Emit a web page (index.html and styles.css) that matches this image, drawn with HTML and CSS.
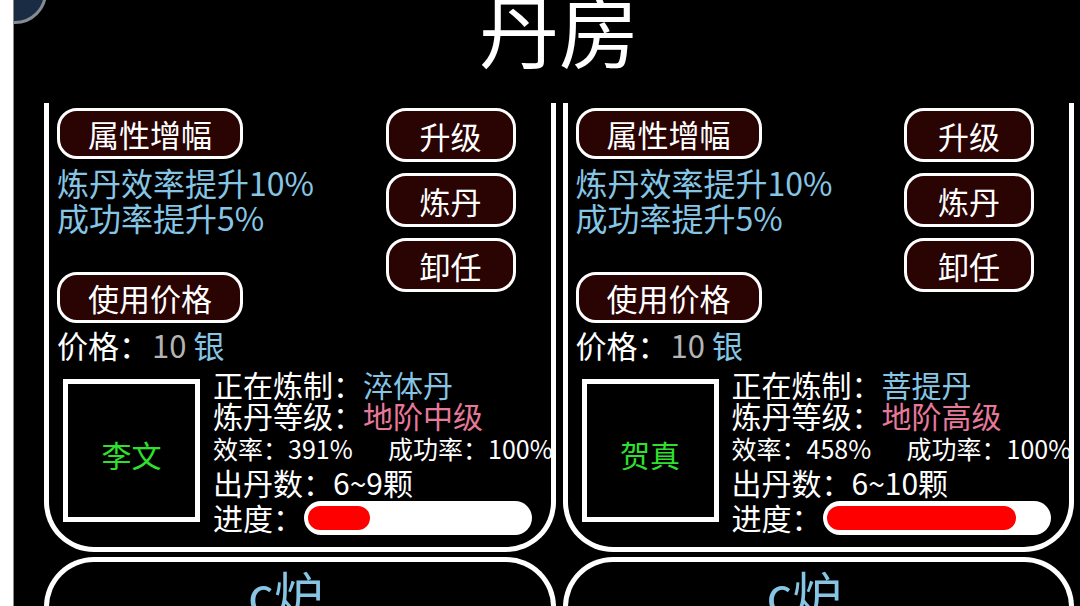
FILE: index.html
```html
<!DOCTYPE html>
<html lang="zh-CN">
<head>
<meta charset="utf-8">
<title>丹房</title>
<link rel="stylesheet" href="styles.css">
</head>
<body>
<div class="app">
  <div class="strip"></div>
  <main class="main">
    <div class="back"></div>
    <header class="header"><h1>丹房</h1></header>
    <div class="grid">
      <section class="card card-top">
        <div class="top-row">
          <div class="left-col">
            <div class="btn btn-wide">属性增幅</div>
            <div class="effects">
              <div>炼丹效率提升10%</div>
              <div>成功率提升5%</div>
            </div>
            <div class="btn btn-wide btn-price">使用价格</div>
            <div class="price">价格：<span class="grey">10</span> <span class="blue">银</span></div>
          </div>
          <div class="right-col">
            <div class="btn btn-small">升级</div>
            <div class="btn btn-small">炼丹</div>
            <div class="btn btn-small">卸任</div>
          </div>
        </div>
        <div class="bottom-row">
          <div class="person"><span>李文</span></div>
          <div class="info">
            <div class="r1">正在炼制：<span class="blue">淬体丹</span></div>
            <div class="r2">炼丹等级：<span class="pink">地阶中级</span></div>
            <div class="r3"><span class="eff">效率：391%</span><span>成功率：100%</span></div>
            <div class="r4">出丹数：6~9颗</div>
            <div class="r5">进度：<div class="bar"><div class="fill" style="width:28%"></div></div></div>
          </div>
        </div>
      </section>
      <section class="card card-top">
        <div class="top-row">
          <div class="left-col">
            <div class="btn btn-wide">属性增幅</div>
            <div class="effects">
              <div>炼丹效率提升10%</div>
              <div>成功率提升5%</div>
            </div>
            <div class="btn btn-wide btn-price">使用价格</div>
            <div class="price">价格：<span class="grey">10</span> <span class="blue">银</span></div>
          </div>
          <div class="right-col">
            <div class="btn btn-small">升级</div>
            <div class="btn btn-small">炼丹</div>
            <div class="btn btn-small">卸任</div>
          </div>
        </div>
        <div class="bottom-row">
          <div class="person"><span>贺真</span></div>
          <div class="info">
            <div class="r1">正在炼制：<span class="blue">菩提丹</span></div>
            <div class="r2">炼丹等级：<span class="pink">地阶高级</span></div>
            <div class="r3"><span class="eff">效率：458%</span><span>成功率：100%</span></div>
            <div class="r4">出丹数：6~10颗</div>
            <div class="r5">进度：<div class="bar"><div class="fill" style="width:86%"></div></div></div>
          </div>
        </div>
      </section>
      <section class="card card-next"><div class="furnace">c炉</div></section>
      <section class="card card-next"><div class="furnace">c炉</div></section>
    </div>
  </main>
</div>
</body>
</html>
```

FILE: styles.css
```css
html, body {
  margin: 0;
  padding: 0;
  background: #000;
}
body {
  width: 1080px;
  height: 606px;
  overflow: hidden;
  font-family: "Noto Sans CJK SC", "Noto Sans", sans-serif;
  color: #fff;
}
.app {
  display: flex;
  height: 606px;
}
.strip {
  width: 13px;
  background: #fff;
  border-right: 1px solid #8a8a8a;
  flex: none;
}
.main {
  flex: 1;
  position: relative;
  overflow: hidden;
  padding: 0 6px 0 30px;
  background: #000;
}
.back {
  position: absolute;
  left: -31px;
  top: -40px;
  width: 58px;
  height: 58px;
  border-radius: 50%;
  background: #1a2c44;
  border: 3px solid #858b93;
}
.header {
  height: 103px;
  text-align: center;
}
.header h1 {
  margin: 0;
  font-size: 80px;
  line-height: 54px;
  font-weight: normal;
  color: #fff;
}
.grid {
  display: grid;
  grid-template-columns: 1fr 1fr;
  grid-template-rows: 449px 200px;
  column-gap: 7px;
  row-gap: 5px;
}
.card {
  box-sizing: border-box;
  border: 5px solid #fff;
  min-width: 0;
}
.card-top {
  border-top: none;
  border-radius: 0 0 50px 50px;
  padding: 5px 35px 0 8px;
  display: flex;
  flex-direction: column;
}
.top-row {
  display: flex;
  justify-content: space-between;
}
.btn {
  box-sizing: border-box;
  border: 3px solid #fff;
  border-radius: 20px;
  background: #2a0303;
  color: #fff;
  font-size: 31px;
  display: flex;
  align-items: center;
  justify-content: center;
  line-height: 1;
}
.btn-wide {
  width: 186px;
  height: 51px;
}
.btn-small {
  width: 130px;
  height: 54px;
}
.right-col {
  display: flex;
  flex-direction: column;
  gap: 11px;
}
.effects {
  margin-top: 6px;
  color: #86c5e4;
  font-size: 32px;
  line-height: 35px;
  white-space: nowrap;
}
.btn-price {
  margin-top: 37px;
}
.price {
  margin-top: 5px;
  font-size: 31px;
  line-height: 34px;
  white-space: nowrap;
}
.grey { color: #b4b4b4; margin-left: 2px; }
.blue { color: #86c5e4; }
.pink { color: #e6789a; }
.bottom-row {
  display: flex;
  align-items: flex-start;
  margin-top: 6px;
}
.person {
  box-sizing: border-box;
  width: 137px;
  height: 143px;
  border: 5px solid #fff;
  margin: 11px 0 0 6px;
  display: flex;
  align-items: center;
  justify-content: center;
  padding-top: 6px;
  color: #2fe02f;
  font-size: 30px;
  flex: none;
}
.info {
  margin-left: 13px;
  font-size: 30px;
  white-space: nowrap;
}
.r1 { line-height: 32px; }
.r2 { line-height: 31px; }
.r3 { font-size: 25px; line-height: 35px; display: flex; }
.r3 .eff { width: 175px; flex: none; }
.r4 { line-height: 33px; }
.r5 {
  display: flex;
  align-items: center;
  line-height: 34px;
}
.bar {
  box-sizing: border-box;
  width: 228px;
  height: 34px;
  margin: 2px 0 0 1px;
  padding: 5px 4px;
  background: #fff;
  border-radius: 17px;
}
.fill {
  height: 24px;
  border-radius: 12px;
  background: #f00;
}
.card-next {
  border-radius: 50px 50px 0 0;
  border-bottom: none;
}
.furnace {
  text-align: center;
  padding-right: 28px;
  font-size: 50px;
  line-height: 60px;
  color: #86c5e4;
}
```
